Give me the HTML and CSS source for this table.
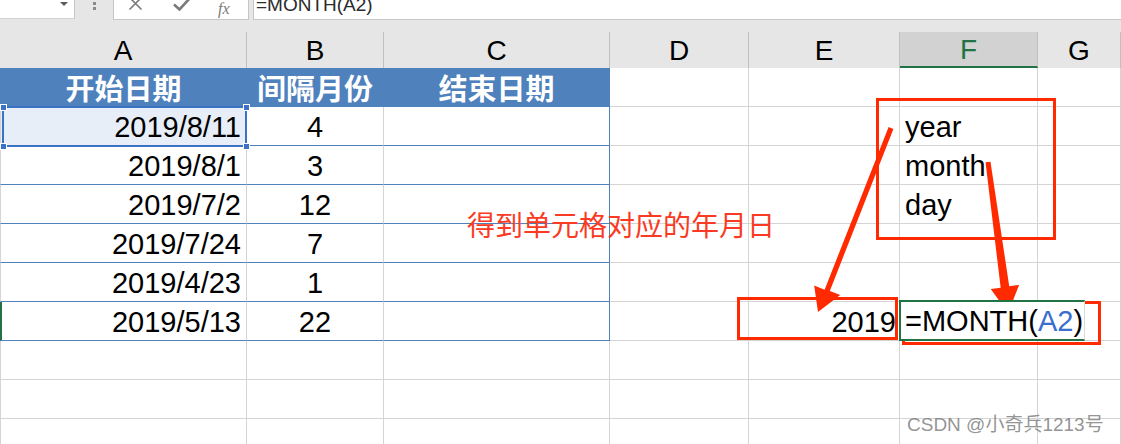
FILE: index.html
```html
<!DOCTYPE html>
<html lang="zh-CN">
<head>
<meta charset="utf-8">
<title>Excel MONTH</title>
<link rel="stylesheet" href="styles.css">
</head>
<body>
<div class="app">
  <div class="fbar">
    <div class="namebox"><span class="dd"></span></div>
    <div class="grip"><span></span><span></span></div>
    <div class="fbtns">
      <svg class="ic-x" width="15" height="14" viewBox="0 0 15 14"><path d="M1.5 0.5 L13.5 12.5 M13.5 0.5 L1.5 12.5" stroke="#7a7a7a" stroke-width="1.6" fill="none"/></svg>
      <svg class="ic-ok" width="18" height="14" viewBox="0 0 18 14"><path d="M1 7.5 L6.5 12.5 L17 1" stroke="#7a7a7a" stroke-width="2.6" fill="none"/></svg>
      <span class="fx">fx</span>
    </div>
    <div class="finput"><span class="ftext">=MONTH(A2)</span></div>
  </div>
  <div class="band"></div>
  <div class="colheads">
    <div class="ch">A</div>
    <div class="ch">B</div>
    <div class="ch">C</div>
    <div class="ch">D</div>
    <div class="ch">E</div>
    <div class="ch act">F</div>
    <div class="ch">G</div>
  </div>
  <div class="sheet">
    <div class="c h first">开始日期</div>
    <div class="c h">间隔月份</div>
    <div class="c h">结束日期</div>
    <div class="c"></div>
    <div class="c"></div>
    <div class="c"></div>
    <div class="c"></div>

    <div class="c r t first sel">2019/8/11<span class="hd tl"></span><span class="hd tr"></span><span class="hd bl"></span><span class="hd br"></span></div>
    <div class="c m t">4</div>
    <div class="c t end"></div>
    <div class="c"></div>
    <div class="c"></div>
    <div class="c l">year</div>
    <div class="c"></div>

    <div class="c r t first">2019/8/1</div>
    <div class="c m t">3</div>
    <div class="c t end"></div>
    <div class="c"></div>
    <div class="c"></div>
    <div class="c l">month</div>
    <div class="c"></div>

    <div class="c r t first">2019/7/2</div>
    <div class="c m t">12</div>
    <div class="c t end"></div>
    <div class="c"></div>
    <div class="c"></div>
    <div class="c l">day</div>
    <div class="c"></div>

    <div class="c r t first">2019/7/24</div>
    <div class="c m t">7</div>
    <div class="c t end"></div>
    <div class="c"></div>
    <div class="c"></div>
    <div class="c"></div>
    <div class="c"></div>

    <div class="c r t first">2019/4/23</div>
    <div class="c m t">1</div>
    <div class="c t end"></div>
    <div class="c"></div>
    <div class="c"></div>
    <div class="c"></div>
    <div class="c"></div>

    <div class="c r t first rowact">2019/5/13</div>
    <div class="c m t">22</div>
    <div class="c t end"></div>
    <div class="c"></div>
    <div class="c r e7">2019</div>
    <div class="c edit"><span class="ed">=MONTH(<span class="ref">A2</span>)</span></div>
    <div class="c"></div>

    <div class="c first"></div><div class="c"></div><div class="c"></div><div class="c"></div><div class="c"></div><div class="c"></div><div class="c"></div>
    <div class="c first"></div><div class="c"></div><div class="c"></div><div class="c"></div><div class="c"></div><div class="c"></div><div class="c"></div>
    <div class="c first"></div><div class="c"></div><div class="c"></div><div class="c"></div><div class="c"></div><div class="c"></div><div class="c"></div>
  </div>

  <div class="note">得到单元格对应的年月日</div>
  <div class="box box-ymd"></div>
  <div class="box box-year"></div>
  <div class="box box-formula"></div>
  <svg class="arrows" width="1121" height="444" viewBox="0 0 1121 444">
    <polygon fill="#ff2a00" points="893.39,128.95 829.82,290.98 840.23,295.11 818,312 814.20,285.55 824.61,289.68 888.61,127.05"/>
    <polygon fill="#ff2a00" points="990.48,161.67 1009.22,286.24 1019.13,284.93 1008,313 990.77,289.11 1000.68,287.80 985.52,162.33"/>
  </svg>
  <div class="wm">CSDN @小奇兵1213号</div>
</div>
</body>
</html>
```
FILE: styles.css
```css
* { box-sizing: border-box; margin: 0; padding: 0; }
html, body { width: 1121px; height: 444px; overflow: hidden; background: #fff; }
body { font-family: "Liberation Sans", Arial, "Noto Sans CJK SC", sans-serif; color: #000; }
.app { position: relative; width: 1121px; height: 444px; overflow: hidden; }

/* formula bar */
.fbar { height: 20px; background: #e6e6e6; display: flex; align-items: flex-start; }
.namebox { width: 75px; height: 19px; background: #fff; border-right: 1px solid #c6c6c6; border-bottom: 1px solid #d2d2d2; display: flex; justify-content: flex-end; padding: 2px 6px 0 0; }
.dd { width: 0; height: 0; border-left: 4px solid transparent; border-right: 4px solid transparent; border-top: 4px solid #5a5a5a; }
.grip { width: 38px; height: 19px; display: flex; flex-direction: column; align-items: center; gap: 2px; padding-top: 2px; }
.grip span { width: 3px; height: 3px; background: #8a8a8a; }
.fbtns { width: 136px; height: 20px; background: #fff; border: 1px solid #c6c6c6; border-top: 0; display: flex; align-items: flex-start; overflow: hidden; }
.ic-x { margin: -3px 0 0 14px; }
.ic-ok { margin: -3px 0 0 30px; }
.fx { margin: 1px 0 0 27px; font-family: "Liberation Serif", serif; font-style: italic; font-size: 16px; color: #7a7a7a; line-height: 16px; }
.finput { flex: 1; margin-left: 4px; height: 20px; background: #fff; border-left: 1px solid #c6c6c6; border-bottom: 1px solid #c6c6c6; overflow: hidden; padding-left: 2px; }
.ftext { display: block; margin-top: -5px; font-size: 19px; line-height: 19px; color: #2b2b2b; }

.band { height: 12px; background: #e6e6e6; }

/* column headers */
.colheads { display: grid; grid-template-columns: 247px 137px 226px 139px 151px 138px 83px; height: 36px; background: #e6e6e6; }
.ch { border-right: 1px solid #c0c0c0; display: flex; align-items: center; justify-content: center; font-size: 28px; color: #000; padding-top: 1px; }
.ch.act { background: #d2d2d2; color: #217346; border-bottom: 2px solid #217346; }

/* sheet */
.sheet { display: grid; grid-template-columns: 247px 137px 226px 139px 151px 138px 83px; grid-auto-rows: 39px; }
.c { border-right: 1px solid #d4d4d4; border-bottom: 1px solid #d4d4d4; display: flex; align-items: center; padding: 2px 5px 0; font-size: 29px; white-space: nowrap; }
.c.first { border-left: 1px solid #d4d4d4; }
.c.r { justify-content: flex-end; }
.c.e7 { padding-right: 3px; }
.c.m { justify-content: center; }
.c.l { justify-content: flex-start; }
.c.h { background: #4f81bd; color: #fff; font-family: "Noto Sans CJK SC", sans-serif; font-size: 29px; font-weight: 700; justify-content: center; border-right-color: #4f81bd; border-bottom-color: #4f81bd; padding-top: 0; }
.c.h.first { border-left-color: #4f81bd; }
.c.t { border-bottom-color: #4f81bd; }
.c.end { border-right-color: #4f81bd; }
.c.rowact { box-shadow: inset 1px 0 0 #217346; border-left-color: #217346; }

.c.sel { position: relative; background: #e8eef8; }
.c.sel::before { content: ""; position: absolute; left: 1px; top: -1px; right: -1px; bottom: -2px; border: 2px solid #3c72c6; }
.hd { position: absolute; width: 5px; height: 5px; background: #3c72c6; outline: 1px solid #fff; }
.hd.tl { left: 0; top: -2px; }
.hd.tr { left: 243px; top: -2px; }
.hd.bl { left: 0; top: 37px; }
.hd.br { left: 243px; top: 37px; }

.c.edit { position: relative; }
.ed { position: absolute; left: -1px; top: -2px; width: 186px; height: 41px; background: #fff; border-left: 2px solid #217346; border-top: 2px solid #217346; border-bottom: 2px solid #217346; border-right: 1px solid #dadada; display: flex; align-items: center; padding: 2px 0 0 4px; z-index: 2; }
.ref { color: #3a6fcf; }

/* annotations */
.note { position: absolute; left: 467px; top: 210px; font-family: "Noto Sans CJK SC", sans-serif; font-size: 28px; line-height: 28px; color: #fb3a24; white-space: nowrap; }
.box { position: absolute; border: 3px solid #ff2a00; }
.box-ymd { left: 876px; top: 98px; width: 180px; height: 142px; }
.box-year { left: 737px; top: 297px; width: 161px; height: 43px; }
.box-formula { left: 902px; top: 301px; width: 199px; height: 44px; }
.arrows { position: absolute; left: 0; top: 0; }
.wm { position: absolute; left: 907px; top: 413px; font-family: "Liberation Sans", "Noto Sans CJK SC", sans-serif; font-size: 19px; line-height: 24px; color: rgba(120,120,120,0.8); white-space: nowrap; }
```
